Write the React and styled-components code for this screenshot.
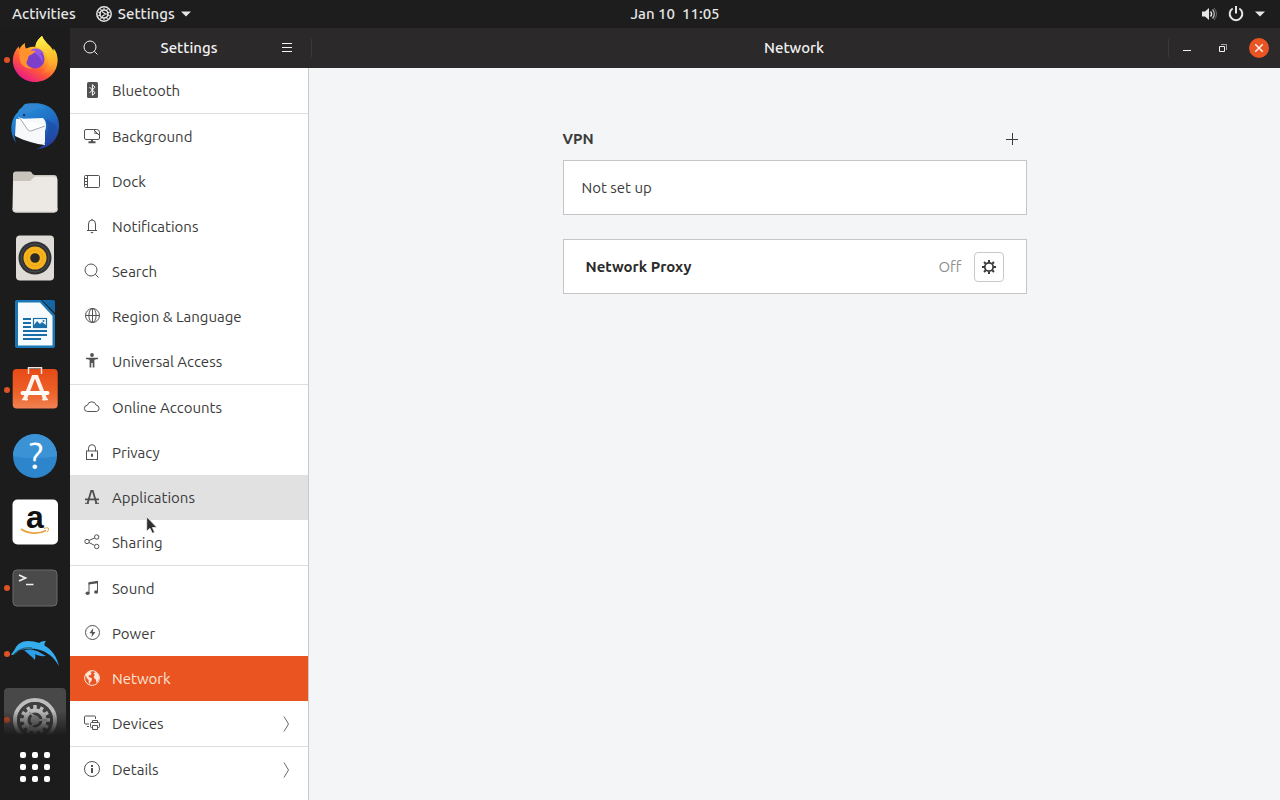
import React from 'react';
import styled, { createGlobalStyle } from 'styled-components';

const GlobalStyle = createGlobalStyle`
  * {
    box-sizing: border-box;
  }

  body {
    margin: 0;
    background: #1c1c1c;
    font-family: Ubuntu, 'Noto Sans', sans-serif;
    font-size: 15px;
    line-height: 20px;
    color: #3b3b3b;
  }

  button {
    font: inherit;
    color: inherit;
    border: 0;
    padding: 0;
    background: none;
  }

  svg {
    display: block;
    flex: none;
    overflow: visible;
  }
`;

const Desktop = styled.div`
  position: relative;
  display: flex;
  flex-direction: column;
  height: 100vh;
  overflow: hidden;
`;

const TopBar = styled.header`
  display: flex;
  flex: none;
  height: 28px;
  padding-right: 15px;
  background: #1d1d1d;
  color: #e6e6e6;
  font-weight: 500;
`;

const TopLeft = styled.div`
  flex: 0 0 calc(50% - 2px);
  display: flex;
  align-items: center;
  gap: 20px;
  padding-left: 12px;
`;

const TopButton = styled.button`
  display: flex;
  align-items: center;
  gap: 6px;
  white-space: pre;
`;

const TopRight = styled.div`
  display: flex;
  align-items: center;
  gap: 11px;
  margin-left: auto;
`;

const Workspace = styled.div`
  display: flex;
  flex: 1;
  min-height: 0;
`;

const Dock = styled.nav`
  display: flex;
  flex-direction: column;
  flex: 0 0 70px;
  background: #1c1c1c;
`;

const DockList = styled.div`
  position: relative;
  display: flex;
  flex-direction: column;
  flex: 1;
  min-height: 0;
  gap: 2px;
  padding: 0 4px;
  overflow: hidden;

  &::after {
    content: '';
    position: absolute;
    left: 0;
    right: 0;
    bottom: 0;
    height: 24px;
    background: linear-gradient(transparent, #1c1c1c);
  }
`;

const DockItem = styled.button`
  position: relative;
  display: flex;
  align-items: center;
  justify-content: center;
  flex: 0 0 64px;
  border-radius: 4px;
  background: ${(props) => (props.$active ? '#484848' : 'none')};
`;

const RunningDot = styled.span`
  position: absolute;
  left: 0;
  top: 29px;
  width: 6px;
  height: 6px;
  border-radius: 50%;
  background: #e05125;
`;

const AppsButton = styled.button`
  display: grid;
  grid-template-columns: repeat(3, 6px);
  gap: 6px;
  place-content: center;
  flex: 0 0 65px;
  padding-bottom: 2px;

  span {
    height: 6px;
    border-radius: 2px;
    background: #fff;
  }
`;

const Window = styled.main`
  display: flex;
  flex-direction: column;
  flex: 1;
  min-width: 0;
  background: #f4f5f7;
`;

const TitleBar = styled.div`
  display: flex;
  flex: none;
  height: 40px;
  background: #2b2929;
  color: #f2f2f2;
`;

const SideTitle = styled.div`
  display: flex;
  align-items: center;
  justify-content: space-between;
  flex: 0 0 238px;
`;

const MainTitle = styled.div`
  display: grid;
  grid-template-columns: 1fr auto 1fr;
  align-items: center;
  flex: 1;
`;

const Title = styled.h1`
  margin: 0;
  font-size: 15px;
  line-height: 20px;
  font-weight: 500;
`;

const Divider = styled.span`
  width: 1px;
  height: 18px;
  margin-left: 3px;
  background: #3a3838;
`;

const BarButton = styled.button`
  display: flex;
  align-items: center;
  justify-content: center;
  width: 42px;
  height: 40px;
`;

const WindowControls = styled.div`
  display: flex;
  align-items: center;
  justify-content: flex-end;
  padding-right: 3px;

  ${BarButton} {
    width: 36px;
  }
`;

const Panels = styled.div`
  display: flex;
  flex: 1;
  min-height: 0;
`;

const Sidebar = styled.nav`
  flex: 0 0 239px;
  overflow: hidden;
  background: #fff;
  border-right: 1px solid #c9c9cb;
`;

const Group = styled.div`
  & + & {
    border-top: 1px solid #dededf;
  }
`;

const Row = styled.a`
  display: flex;
  align-items: center;
  gap: 12px;
  height: 45px;
  padding: 0 14px;
  text-decoration: none;
  color: ${(props) => (props.$selected ? '#fde6d8' : '#3b3b3b')};
  background: ${(props) => (props.$selected ? '#e95420' : props.$hovered ? '#e1e1e1' : 'none')};

  svg {
    opacity: ${(props) => (props.$selected ? 1 : 0.88)};
  }

  svg:first-child {
    margin-bottom: 2px;
  }
`;

const RowLabel = styled.span`
  flex: 1;
`;

const Content = styled.section`
  display: flex;
  flex-direction: column;
  align-items: center;
  flex: 1;
  padding: 52px 24px 24px;
`;

const Column = styled.div`
  width: 100%;
  max-width: 464px;
`;

const SectionHeader = styled.div`
  display: flex;
  align-items: center;
  justify-content: space-between;
  height: 38px;
  margin-bottom: 2px;
`;

const SectionTitle = styled.h2`
  margin: 0;
  font-size: 15px;
  line-height: 20px;
  font-weight: 700;
`;

const AddButton = styled.button`
  display: flex;
  align-items: center;
  justify-content: center;
  width: 30px;
  height: 30px;
`;

const Card = styled.div`
  display: flex;
  align-items: center;
  gap: 12px;
  min-height: 55px;
  padding: 0 ${(props) => (props.$wide ? 22 : 18)}px;
  background: #fff;
  border: 1px solid #c5c5c8;

  & + & {
    margin-top: 24px;
  }
`;

const CardTitle = styled.strong`
  flex: 1;
  color: #2a2a2a;
`;

const CardValue = styled.span`
  color: #8f8f8f;
`;

const GearButton = styled.button`
  display: flex;
  align-items: center;
  justify-content: center;
  width: 30px;
  height: 30px;
  border: 1px solid #c9c9c9;
  border-radius: 4px;
  background: #fff;
`;

const Pointer = styled.svg`
  position: absolute;
  left: 146px;
  top: 516px;
  pointer-events: none;
`;

// 16px symbolic icon, drawn with strokes
const Icon = ({ children, size = 16, stroke = 1 }) => (
  <svg
    width={size}
    height={size}
    viewBox="0 0 16 16"
    fill="none"
    stroke="currentColor"
    strokeWidth={stroke}
    aria-hidden="true"
  >
    {children}
  </svg>
);

const SearchIcon = () => (
  <Icon>
    <circle cx="7" cy="7" r="6" />
    <path d="M11.3 11.3 14.5 14.5" />
  </Icon>
);

const Caret = () => (
  <svg width="10" height="6" viewBox="0 0 10 6" fill="currentColor" aria-hidden="true">
    <path d="M0 .5h10L5 5.5z" />
  </svg>
);

const Teeth = ({ cx, cy, inner, outer, count, width, color }) =>
  Array.from({ length: count }, (_, i) => (
    <path
      key={i}
      d={`M${cx} ${cy - inner}V${cy - outer}`}
      stroke={color}
      strokeWidth={width}
      transform={`rotate(${(360 / count) * i} ${cx} ${cy})`}
    />
  ));

const TopGear = () => (
  <Icon>
    <circle cx="8" cy="8" r="7.2" strokeWidth="1.5" />
    <circle cx="8" cy="8" r="4" strokeWidth="1.6" />
    <Teeth cx={8} cy={8} inner={4.3} outer={6} count={10} width={1.1} color="currentColor" />
    <path d="M9.5 8 6 5.5M9.5 8 6 10.5M9.3 8H12" strokeWidth="1.2" />
  </Icon>
);

const icons = {
  bluetooth: (
    <Icon>
      <rect x="3" y="0" width="11" height="16" rx="1.5" fill="currentColor" stroke="none" />
      <path d="m5.5 5 5.5 5.8-2.6 2.5V2.7L11 5.2 5.5 11" stroke="#fff" />
    </Icon>
  ),
  background: (
    <Icon>
      <path d="M9 1.5H2A1.5 1.5 0 0 0 .5 3v7A1.5 1.5 0 0 0 2 11.5h12a1.5 1.5 0 0 0 1.5-1.5V7" />
      <path d="M9.5 1.5h3.2a2.8 2.8 0 0 1 2.8 2.8V7.5z" />
      <path d="M9.5 1.5c1.7 1 1.6 2.7 1.2 3.8 1.5-.2 3.6.2 4.8 2.2" />
      <path d="M8 12v2M4.5 14.3h7" strokeWidth="2" />
    </Icon>
  ),
  dock: (
    <Icon>
      <rect x=".5" y="2.5" width="15" height="12" rx="1" />
      <path d="M3.5 2.5v12M1 5.5h2.5M1 8.5h2.5M1 11.5h2.5" />
    </Icon>
  ),
  notifications: (
    <Icon>
      <path d="M3 12.5h10M4.5 12.5V6a3.5 4 0 0 1 7 0v6.5M8 2V.8" />
      <path d="M6.3 14h3.4L8 15.4z" fill="currentColor" stroke="none" />
    </Icon>
  ),
  search: <SearchIcon />,
  region: (
    <Icon>
      <circle cx="8.5" cy="7.5" r="7" />
      <ellipse cx="8.5" cy="7.5" rx="3.6" ry="7" />
      <path d="M8.5.5v14M1.5 7.5h14" />
    </Icon>
  ),
  access: (
    <Icon>
      <circle cx="8" cy="2" r="1.9" fill="currentColor" stroke="none" />
      <path d="M2 4.7h12v1.2l-3.6.8V14.5H8.700V10H7.300v4.500H5.600V6.700L2 5.900z" fill="currentColor" stroke="none" />
    </Icon>
  ),
  accounts: (
    <Icon>
      <path d="M3.7 12.5a3.1 3.1 0 0 1-.4-6.2 4.6 4.6 0 0 1 8.9-.1 3.2 3.2 0 0 1 .4 6.3z" />
    </Icon>
  ),
  privacy: (
    <Icon>
      <rect x="2.5" y="7" width="11" height="8.5" />
      <path d="M4.5 7V4.2a3.5 3.5 0 0 1 7 0V7" />
      <path d="M8 9.7v3" strokeWidth="2" />
    </Icon>
  ),
  applications: (
    <Icon>
      <path d="M3.500 14.5 7.2 2h1.6l3.700 12.500" strokeWidth="1.800" />
      <path d="M1 9.5h14v1.800H1z" fill="currentColor" stroke="none" />
      <path d="M1 14.300h4M11 14.300h4" />
    </Icon>
  ),
  sharing: (
    <Icon>
      <circle cx="3" cy="7.5" r="2.2" />
      <circle cx="12.7" cy="3" r="2.2" />
      <circle cx="12.7" cy="12.5" r="2.2" />
      <path d="m5 6.5 5.7-2.6M5 8.5l5.7 3" />
    </Icon>
  ),
  sound: (
    <Icon>
      <path d="M5 13V3.2L13.5 2v9.5" />
      <path d="M4.5 2.2 14 .8v2.4L4.5 4.6z" fill="currentColor" stroke="none" />
      <ellipse cx="3.6" cy="13.2" rx="2" ry="1.8" fill="currentColor" stroke="none" />
      <ellipse cx="12.1" cy="12" rx="2" ry="1.8" fill="currentColor" stroke="none" />
    </Icon>
  ),
  power: (
    <Icon>
      <circle cx="8.5" cy="7.5" r="7" />
      <path d="M9.3 3 5.4 8.3H8l-.5 3.9 3.9-5.3H8.8z" fill="currentColor" stroke="none" />
    </Icon>
  ),
  network: (
    <Icon>
      <circle cx="8" cy="8" r="7.4" />
      <path
        d="M1.500 5C3 2.500 4.500 1.500 7 1l.8 1-1.600.8 1.600 1L6 5.500 5 5l-.5 1.500L6 7.500l2 1L7.500 11l-1.500 1.500-.3 2L4.500 12l.3-2L3 8.500z"
        fill="currentColor"
        stroke="none"
      />
      <path
        d="M9.500 3 12 2l2.500 3 .8 3-.8 1.500-1 2.500-1.200.5-.5-3L10 8l-.3-2 1.300-.8z"
        fill="currentColor"
        stroke="none"
      />
    </Icon>
  ),
  devices: (
    <Icon>
      <path d="M11.5 4V2a1 1 0 0 0-1-1h-9a1 1 0 0 0-1 1v6a1 1 0 0 0 1 1H5M3 11.5h2" />
      <path d="M8.5 7.5v-2h5v2M8.5 12.5h-1a1 1 0 0 1-1-1v-3a1 1 0 0 1 1-1h7a1 1 0 0 1 1 1v3a1 1 0 0 1-1 1h-1" />
      <path d="M8.5 10.5h5v4h-5z" />
    </Icon>
  ),
  details: (
    <Icon>
      <circle cx="8" cy="8" r="7.5" />
      <path d="M8 7v5M8 4v2" strokeWidth="2" />
    </Icon>
  ),
};

const Chevron = () => (
  <svg width="16" height="16" viewBox="0 0 16 16" fill="none" stroke="#555" aria-hidden="true">
    <path d="m6 .5 4.5 7.5L6 15.5" />
  </svg>
);

const GearIcon = () => (
  <Icon>
    <circle cx="8" cy="8" r="4.2" strokeWidth="1.8" />
    <Teeth cx={8} cy={8} inner={4.6} outer={7} count={8} width={2} color="currentColor" />
  </Icon>
);

// 48px launcher icons
const AppIcon = ({ children }) => (
  <svg width="48" height="48" viewBox="0 0 48 48" fill="none" aria-hidden="true">
    {children}
  </svg>
);

const FirefoxIcon = () => (
  <AppIcon>
    <defs>
      <linearGradient id="fox" x1="38" y1="4" x2="12" y2="44" gradientUnits="userSpaceOnUse">
        <stop offset="0" stopColor="#fff044" />
        <stop offset=".35" stopColor="#ffae28" />
        <stop offset=".65" stopColor="#ff5a36" />
        <stop offset="1" stopColor="#e9178c" />
      </linearGradient>
      <linearGradient id="foxTail" x1="30" y1="0" x2="42" y2="40" gradientUnits="userSpaceOnUse">
        <stop offset="0" stopColor="#fff44f" />
        <stop offset=".5" stopColor="#ffc22c" />
        <stop offset="1" stopColor="#ff8a2c" stopOpacity="0" />
      </linearGradient>
    </defs>
    <path
      d="M31 0c-4 3-6.5 7-6.5 11-4.5-1-7 .5-9.5 1.5-1-1.5-1.3-3.5-1-5.5-2.5 1.5-4.5 3.5-5.5 6-.7-.8-.8-2-.5-3C4 14 1.8 19 1.8 24.5 2 36.5 12 46 24 46s22.500-9 22.500-21.500c0-5-1.500-9-4-12 .2 1 .2 2 0 3C40 9.500 34 7 31 0z"
      fill="url(#fox)"
    />
    <path
      d="M31 0c-4 3-6.5 7-6.5 11C32 13 37 18 37 26c0 6-4 10-7 12 9-1 16.5-6 16.5-14 0-5-1.5-8.5-4-11.5.2 1 .2 2 0 3C40 9.500 34 7 31 0z"
      fill="url(#foxTail)"
    />
    <circle cx="24" cy="23" r="9.5" fill="#7b3fc9" />
    <path d="M20 14c5-3 11-1 13 4-2-1-3-1-4-.5 3 2 3.5 6 2 9-1-5-5-8-11-12.5z" fill="#9657e5" />
    <path
      d="M8.5 13c4-2 7 0 9 1 2 1 5 .5 7 1-1 3-6 3.5-7 5.5l-1 3.5c-3 4 1 8 6 8-8 2-15-4-14-13z"
      fill="#ff922f"
    />
  </AppIcon>
);

const ThunderbirdIcon = () => (
  <AppIcon>
    <defs>
      <linearGradient id="bird" x1="12" y1="2" x2="36" y2="46" gradientUnits="userSpaceOnUse">
        <stop offset="0" stopColor="#2a93dc" />
        <stop offset=".5" stopColor="#1f6fc4" />
        <stop offset="1" stopColor="#263a9c" />
      </linearGradient>
    </defs>
    <path
      d="M12 5C19-1 35 0 42 8c8 9 8 22 1 31-4 5-11 8-18 8 4-1 7-3 8-5L3 33l2 8C-2 31-1 17 7 10c1-3 3-4 5-5z"
      fill="url(#bird)"
    />
    <path d="M14 2c7-2 15 0 20 5-7-2-12 0-15 4-4-1-7 1-9 5-1-6 0-11 4-14z" fill="#3187d4" />
    <path d="m5 17 27-1c3 3 4 8 2 13v14c-9-1-20-4-30-9z" fill="#f7f8fa" />
    <path d="m7 15 12 15 14-6z" fill="#fff" />
    <path d="m8 15 9 13c1 1 2 1 3 1l14-5" stroke="#8b9099" strokeWidth=".8" />
    <circle cx="13" cy="13" r="1.2" fill="#15366f" />
    <path d="M35 17c3 8 3 16-2 25 6-3 12-10 12-19" fill="#1b4fa8" opacity=".7" />
  </AppIcon>
);

const FilesIcon = () => (
  <AppIcon>
    <path d="M5 3.5h14c2 0 2 3.5 5 3.5h19a3 3 0 0 1 3 3v20H2V6.5a3 3 0 0 1 3-3z" fill="#c9c5bd" />
    <path
      d="M2 13h17l5-4.5h19a3.500 3.500 0 0 1 3.500 3V41a3.500 3.500 0 0 1-3.500 3.500H5A3.500 3.500 0 0 1 1.500 41z"
      fill="#ece9e4"
    />
    <path d="M2 40a3.5 3.5 0 0 0 3 4h38a3.500 3.500 0 0 0 3.500-3.500" stroke="#d2cec8" />
  </AppIcon>
);

const RhythmboxIcon = () => (
  <AppIcon>
    <rect x="5" y="1.5" width="38" height="45" rx="4" fill="#dfdcd7" />
    <circle cx="24" cy="24" r="16.5" fill="#2f3133" />
    <circle cx="24" cy="24" r="14" stroke="#4d5052" />
    <circle cx="24" cy="24" r="11.5" fill="#f6b31c" />
    <circle cx="24" cy="24" r="8" stroke="#e8a517" />
    <circle cx="24" cy="24" r="4.8" fill="#2b2a28" />
  </AppIcon>
);

const WriterIcon = () => (
  <AppIcon>
    <path d="M6 0h24l14 15v31a2 2 0 0 1-2 2H6a2 2 0 0 1-2-2V2a2 2 0 0 1 2-2z" fill="#1a76b4" />
    <path d="M7 2.5h22L41.5 16v29.500H7z" fill="#f7fbfd" />
    <path d="M31 0h11a2 2 0 0 1 2 2v11z" fill="#1268a6" />
    <path d="M12 19h8M12 23h8M12 27h8M12 31h24M12 35h24M12 39h18" stroke="#1b6fa8" strokeWidth="1.8" />
    <rect x="22.5" y="18.5" width="13" height="9" stroke="#1b6fa8" strokeWidth="1.2" />
    <path d="M23 27v-2l3-4 3 3 2-2 4 3v2z" fill="#1b6fa8" />
    <circle cx="32.5" cy="21" r="1" fill="#1b6fa8" />
  </AppIcon>
);

const SoftwareIcon = () => (
  <AppIcon>
    <defs>
      <linearGradient id="bag" x1="0" y1="3" x2="0" y2="43" gradientUnits="userSpaceOnUse">
        <stop offset="0" stopColor="#e64a16" />
        <stop offset=".6" stopColor="#ee6229" />
        <stop offset="1" stopColor="#f08354" />
      </linearGradient>
    </defs>
    <rect x="1.700" y="3" width="45" height="39.5" rx="4" fill="url(#bag)" />
    <path d="M17.5 8V1.800h13V8" stroke="#f6e4dc" strokeWidth="1.5" />
    <path d="M13.5 34 22.5 11h3l9 23" stroke="#fdf2ec" strokeWidth="4" />
    <rect x="9.5" y="25" width="29" height="4" rx="2" fill="#fff" />
    <path d="M11 33.500h6M31 33.500h6" stroke="#fdf2ec" strokeWidth="1.5" />
  </AppIcon>
);

const HelpIcon = () => (
  <AppIcon>
    <circle cx="24" cy="24" r="22" fill="#2d86cc" />
    <path d="M2 24a22 22 0 0 1 44 0c-14 3-30 3-44 0z" fill="#3b93d6" />
    <text x="25" y="37" fontSize="37" fontFamily="Ubuntu, 'Noto Sans', sans-serif" textAnchor="middle" fill="#fff">
      ?
    </text>
  </AppIcon>
);

const AmazonIcon = () => (
  <AppIcon>
    <rect x="1.5" y="1.5" width="45.5" height="45" rx="5" fill="#fff" />
    <text
      x="24"
      y="30"
      fontSize="32"
      fontWeight="700"
      fontFamily="'Liberation Sans', sans-serif"
      textAnchor="middle"
      fill="#111"
    >
      a
    </text>
    <path d="M10 31c7 5 18 5.500 25 1.500" stroke="#e8a33a" strokeWidth="1.8" />
    <path d="M33 30.500c2-.8 4-.8 4.500-.3.300 1-.5 3-1.500 4" stroke="#e8a33a" />
  </AppIcon>
);

const TerminalIcon = () => (
  <AppIcon>
    <rect x="2" y="6" width="44" height="36" rx="4" fill="#4a4a4a" stroke="#6b6b6b" />
    <path d="m8 11 6.500 3L8 17M15 20.500h7.500" stroke="#f0f0f0" strokeWidth="1.7" />
  </AppIcon>
);

const DolphinIcon = () => (
  <AppIcon>
    <path
      d="M0 25c1-2 3-4 4-6 2-5 7-8 13-8 4 0 8 .7 11 2 2-1.500 4-2.300 7-2-1.300 1.500-1.800 2.800-1.500 4.500C41 20 46 27 48 36c-4-7-9-12-16-15-5-2-9-2.500-14-2.200C12 19 8 20 5 23c-1.500 1.500-3 2-5 2z"
      fill="#35aef0"
    />
    <path
      d="M13 20c5-1 9-.5 13 1 3 1.200 5 3 9 5-5 .5-8-.3-11-2 .5 2 .8 4-.5 6-2-3.500-6-5.500-10.500-10z"
      fill="#2b9fe8"
    />
    <path d="M3 24c5-5 11-7 18-6" stroke="#1c1c1c" strokeWidth=".6" />
  </AppIcon>
);

const SettingsIcon = () => (
  <AppIcon>
    <circle cx="24" cy="24" r="20" stroke="#bdbdbd" strokeWidth="4" />
    <circle cx="24" cy="24" r="18" fill="#3f3f3f" />
    <circle cx="24" cy="24" r="9.5" stroke="#bdbdbd" strokeWidth="4" />
    <Teeth cx={24} cy={24} inner={11} outer={15} count={12} width={3.5} color="#bdbdbd" />
    <path d="M28 24 18 16M28 24 18 32M27 24h9" stroke="#9c9c9c" strokeWidth="2" />
    <circle cx="24" cy="24" r="4.5" fill="#8c8c8c" />
  </AppIcon>
);

const dockApps = [
  { name: 'Firefox', icon: FirefoxIcon, running: true },
  { name: 'Thunderbird', icon: ThunderbirdIcon },
  { name: 'Files', icon: FilesIcon },
  { name: 'Rhythmbox', icon: RhythmboxIcon },
  { name: 'LibreOffice Writer', icon: WriterIcon },
  { name: 'Ubuntu Software', icon: SoftwareIcon, running: true },
  { name: 'Help', icon: HelpIcon },
  { name: 'Amazon', icon: AmazonIcon },
  { name: 'Terminal', icon: TerminalIcon, running: true },
  { name: 'Dolphin', icon: DolphinIcon, running: true },
  { name: 'Settings', icon: SettingsIcon, running: true, active: true },
];

const groups = [
  [{ id: 'bluetooth', label: 'Bluetooth' }],
  [
    { id: 'background', label: 'Background' },
    { id: 'dock', label: 'Dock' },
    { id: 'notifications', label: 'Notifications' },
    { id: 'search', label: 'Search' },
    { id: 'region', label: 'Region & Language' },
    { id: 'access', label: 'Universal Access' },
  ],
  [
    { id: 'accounts', label: 'Online Accounts' },
    { id: 'privacy', label: 'Privacy' },
    { id: 'applications', label: 'Applications', hovered: true },
    { id: 'sharing', label: 'Sharing' },
  ],
  [
    { id: 'sound', label: 'Sound' },
    { id: 'power', label: 'Power' },
    { id: 'network', label: 'Network', selected: true },
    { id: 'devices', label: 'Devices', more: true },
  ],
  [{ id: 'details', label: 'Details', more: true }],
];

const App = () => {
  return (
    <Desktop>
      <GlobalStyle />
      <TopBar>
        <TopLeft>
          <TopButton>Activities</TopButton>
          <TopButton>
            <TopGear />
            Settings
            <Caret />
          </TopButton>
        </TopLeft>
        <TopButton>{'Jan 10  11:05'}</TopButton>
        <TopRight>
          <TopButton aria-label="Volume">
            <Icon>
              <path d="M1 5.5h3L8 2v12l-4-3.500H1z" fill="currentColor" stroke="none" />
              <path d="M9.500 5.500a3.500 3.500 0 0 1 0 5" strokeWidth="1.5" />
              <path d="M11.500 3.500a6.500 6.500 0 0 1 0 9" strokeWidth="1.3" opacity=".8" />
              <path d="M13 2a8.500 8.500 0 0 1 0 12" opacity=".4" />
            </Icon>
          </TopButton>
          <TopButton aria-label="Power">
            <Icon>
              <path d="M4.700 2.500a6.300 6.300 0 1 0 6.600 0" strokeWidth="2" />
              <path d="M8 0v7.500" strokeWidth="2" />
            </Icon>
          </TopButton>
          <TopButton aria-label="System menu">
            <Caret />
          </TopButton>
        </TopRight>
      </TopBar>

      <Workspace>
        <Dock aria-label="Dock">
          <DockList>
            {dockApps.map(({ name, icon: AppLogo, running, active }) => (
              <DockItem key={name} aria-label={name} $active={active}>
                {running && <RunningDot />}
                <AppLogo />
              </DockItem>
            ))}
          </DockList>
          <AppsButton aria-label="Show Applications">
            {Array.from({ length: 9 }, (_, i) => (
              <span key={i} />
            ))}
          </AppsButton>
        </Dock>

        <Window>
          <TitleBar>
            <SideTitle>
              <BarButton aria-label="Search">
                <SearchIcon />
              </BarButton>
              <Title>Settings</Title>
              <BarButton aria-label="Menu">
                <Icon>
                  <path d="M3 3.5h10M3 7.5h10M3 11.5h10" />
                </Icon>
              </BarButton>
            </SideTitle>
            <MainTitle>
              <Divider />
              <Title>Network</Title>
              <WindowControls>
                <Divider />
                <BarButton aria-label="Minimize">
                  <Icon>
                    <path d="M4 10.5h8" />
                  </Icon>
                </BarButton>
                <BarButton aria-label="Restore">
                  <Icon>
                    <path d="M4.500 6.500h5v5h-5z" />
                    <path d="M6 4.500h5.500V10" opacity=".6" />
                  </Icon>
                </BarButton>
                <BarButton aria-label="Close">
                  <Icon size={20}>
                    <circle cx="8" cy="8" r="8" fill="#ea5423" stroke="none" />
                    <path d="m5 5 6 6M11 5l-6 6" strokeWidth="1.2" />
                  </Icon>
                </BarButton>
              </WindowControls>
            </MainTitle>
          </TitleBar>

          <Panels>
            <Sidebar aria-label="Settings">
              {groups.map((items) => (
                <Group key={items[0].id}>
                  {items.map((item) => (
                    <Row
                      key={item.id}
                      href={`#${item.id}`}
                      aria-current={item.selected ? 'page' : undefined}
                      $selected={item.selected}
                      $hovered={item.hovered}
                    >
                      {icons[item.id]}
                      <RowLabel>{item.label}</RowLabel>
                      {item.more && <Chevron />}
                    </Row>
                  ))}
                </Group>
              ))}
            </Sidebar>

            <Content>
              <Column>
                <SectionHeader>
                  <SectionTitle>VPN</SectionTitle>
                  <AddButton aria-label="Add VPN">
                    <Icon>
                      <path d="M2 8.5h12M8.5 2v12" />
                    </Icon>
                  </AddButton>
                </SectionHeader>
                <Card>Not set up</Card>
                <Card $wide>
                  <CardTitle>Network Proxy</CardTitle>
                  <CardValue>Off</CardValue>
                  <GearButton aria-label="Network Proxy options">
                    <GearIcon />
                  </GearButton>
                </Card>
              </Column>
            </Content>
          </Panels>
        </Window>
      </Workspace>

      <Pointer width="12" height="18" viewBox="0 0 12 18" aria-hidden="true">
        <path
          d="M.7.8v14.500l3.300-3 2.300 5 2.300-1-2.200-4.800h4.500z"
          fill="#2e2e2e"
          stroke="#f0f0f0"
          strokeWidth=".8"
        />
      </Pointer>
    </Desktop>
  );
};

export default App;
